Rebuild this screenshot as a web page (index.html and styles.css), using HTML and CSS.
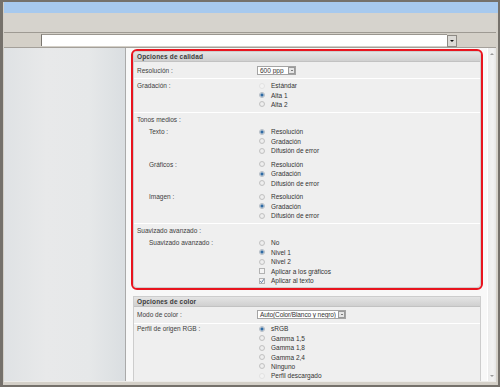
FILE: index.html
```html
<!DOCTYPE html>
<html lang="es">
<head>
<meta charset="utf-8">
<title>Opciones de calidad</title>
<link rel="stylesheet" href="styles.css">
</head>
<body>
<div class="frame">
  <div class="titlebar"></div>
  <div class="toolbar"></div>
  <div class="addressbar">
    <div class="addr-input"></div>
    <div class="addr-btn"><span class="tri"></span></div>
  </div>
  <div class="main">
    <aside class="sidebar"></aside>
    <div class="content">
      <section class="panel highlight">
        <div class="panel-head">Opciones de calidad</div>
        <div class="row row-select">
          <div class="label">Resolución :</div>
          <div class="select w600"><span class="select-text">600 ppp</span><span class="select-btn"><span class="tri"></span></span></div>
        </div>
        <div class="row">
          <div class="label">Gradación :</div>
          <div class="options">
            <div class="opt"><span class="radio disabled"></span>Estándar</div>
            <div class="opt"><span class="radio checked"></span>Alta 1</div>
            <div class="opt"><span class="radio"></span>Alta 2</div>
          </div>
        </div>
        <div class="row group">
          <div class="group-title">Tonos medios :</div>
          <div class="subrows">
            <div class="subrow">
              <div class="sublabel">Texto :</div>
              <div class="options">
                <div class="opt"><span class="radio checked"></span>Resolución</div>
                <div class="opt"><span class="radio"></span>Gradación</div>
                <div class="opt"><span class="radio"></span>Difusión de error</div>
              </div>
            </div>
            <div class="subrow">
              <div class="sublabel">Gráficos :</div>
              <div class="options">
                <div class="opt"><span class="radio"></span>Resolución</div>
                <div class="opt"><span class="radio checked"></span>Gradación</div>
                <div class="opt"><span class="radio"></span>Difusión de error</div>
              </div>
            </div>
            <div class="subrow">
              <div class="sublabel">Imagen :</div>
              <div class="options">
                <div class="opt"><span class="radio"></span>Resolución</div>
                <div class="opt"><span class="radio checked"></span>Gradación</div>
                <div class="opt"><span class="radio"></span>Difusión de error</div>
              </div>
            </div>
          </div>
        </div>
        <div class="row group last">
          <div class="group-title">Suavizado avanzado :</div>
          <div class="subrows">
            <div class="subrow">
              <div class="sublabel">Suavizado avanzado :</div>
              <div class="options">
                <div class="opt"><span class="radio"></span>No</div>
                <div class="opt"><span class="radio checked"></span>Nivel 1</div>
                <div class="opt"><span class="radio"></span>Nivel 2</div>
                <div class="opt"><span class="check"></span>Aplicar a los gráficos</div>
                <div class="opt"><span class="check checked"><svg viewBox="0 0 6 6" width="6" height="6"><polyline points="1.2,3.2 2.5,4.6 4.9,1.2" fill="none" stroke="#4a6f9c" stroke-width="0.9"/></svg></span>Aplicar al texto</div>
              </div>
            </div>
          </div>
        </div>
      </section>
      <section class="panel">
        <div class="panel-head">Opciones de color</div>
        <div class="row row-select">
          <div class="label">Modo de color :</div>
          <div class="select wauto"><span class="select-text">Auto(Color/Blanco y negro)</span><span class="select-btn"><span class="tri"></span></span></div>
        </div>
        <div class="row tight">
          <div class="label">Perfil de origen RGB :</div>
          <div class="options">
            <div class="opt"><span class="radio checked"></span>sRGB</div>
            <div class="opt"><span class="radio"></span>Gamma 1,5</div>
            <div class="opt"><span class="radio"></span>Gamma 1,8</div>
            <div class="opt"><span class="radio"></span>Gamma 2,4</div>
            <div class="opt"><span class="radio"></span>Ninguno</div>
            <div class="opt"><span class="radio disabled"></span>Perfil descargado</div>
          </div>
        </div>
      </section>
    </div>
    <div class="scrollbar"><span class="sb-up"></span><span class="sb-down"></span></div>
  </div>
  <div class="statusbar"></div>
</div>
</body>
</html>
```
FILE: styles.css
```css
html, body {
  margin: 0;
  padding: 0;
  background: #75716b;
  width: 500px;
  height: 387px;
  overflow: hidden;
}
body {
  padding: 2px 2px 2px 3px;
  box-sizing: border-box;
  font-family: "Liberation Sans", Arial, sans-serif;
  font-size: 6.5px;
  color: #353535;
}
.frame {
  width: 495px;
  height: 383px;
  background: #d4d0c8;
  padding: 0 2px 0 1px;
  box-sizing: border-box;
  display: flex;
  flex-direction: column;
}
.titlebar {
  height: 11px;
  background: #a7c9ee;
  margin-right: -2px;
}
.toolbar {
  height: 19px;
  background: #d6d3cd;
  border-bottom: 1px solid #9e9a93;
}
.addressbar {
  height: 15px;
  display: flex;
  align-items: flex-start;
  padding-top: 1px;
  padding-left: 37px;
  box-sizing: border-box;
  border-bottom: 1px solid #a4a09a;
}
.addr-input {
  width: 405px;
  height: 11px;
  background: #fff;
  border-left: 1px solid #7a7670;
  border-top: 1px solid #9a968f;
}
.addr-btn {
  width: 8px;
  height: 10px;
  margin-top: 1px;
  background: #dcdad6;
  border: 1px solid #8e8a84;
  display: flex;
  align-items: center;
  justify-content: center;
}
.tri {
  width: 0;
  height: 0;
  border-left: 2px solid transparent;
  border-right: 2px solid transparent;
  border-top: 2px solid #111;
}
.main {
  flex: 1;
  display: flex;
  min-height: 0;
}
.sidebar {
  width: 121px;
  background: linear-gradient(to right, #dfe2e4 0%, #e8e9ea 35%, #e6e8e9 70%, #dadee1 100%);
  border-right: 1px solid #aaaaaa;
}
.content {
  width: 361px;
  background: #f8f8f8;
  padding: 3px 6px 0 7px;
  box-sizing: border-box;
  overflow: hidden;
}
.scrollbar {
  width: 9px;
  background: linear-gradient(to right, #ffffff 0, #ffffff 1px, #ececec 1px, #f2f2f2 6px, #e6e6e6 100%);
  display: flex;
  flex-direction: column;
  justify-content: space-between;
  align-items: center;
  padding: 5px 0 4px;
  box-sizing: border-box;
}
.sb-up {
  width: 0;
  height: 0;
  border-left: 2px solid transparent;
  border-right: 2px solid transparent;
  border-bottom: 2px solid #9a9a9a;
}
.sb-down {
  width: 0;
  height: 0;
  border-left: 2px solid transparent;
  border-right: 2px solid transparent;
  border-top: 2px solid #9a9a9a;
}
.statusbar {
  height: 4px;
  background: #d4d0c8;
  border-top: 1px solid #ecebe8;
  box-sizing: border-box;
}
.panel {
  background: #efefef;
  border: 1px solid #cdcdcd;
  margin-bottom: 8px;
}
.panel.highlight {
  outline: 2px solid #e8141e;
  border-radius: 4px;
}
.panel-head {
  height: 10px;
  line-height: 10px;
  padding-left: 3px;
  background: linear-gradient(#e4e4e4, #d0d0d0);
  border-bottom: 1px solid #c2c2c2;
  box-sizing: border-box;
  font-weight: bold;
  color: #3a3a3a;
  letter-spacing: 0.15px;
}
.highlight .panel-head {
  border-radius: 3px 3px 0 0;
}
.row {
  display: flex;
  padding: 2px 3px 3px;
  border-top: 1px solid #ffffff;
}
.panel-head + .row {
  border-top: 0;
}
.row-select {
  padding: 3.5px 3px;
  align-items: center;
}
.row.tight {
  padding-top: 0.5px;
}
.label {
  width: 120px;
  flex: none;
  line-height: 9.4px;
  color: #404040;
}
.row-select .label {
  line-height: 9px;
}
.group {
  flex-direction: column;
  padding: 2px 3px 2.5px;
}
.group.last {
  padding: 2.5px 3px 1.5px;
}
.group-title {
  line-height: 9.4px;
  color: #404040;
}
.subrows {
  display: flex;
  flex-direction: column;
  gap: 4.4px;
  margin-top: 2.5px;
}
.subrow {
  display: flex;
  padding-left: 12px;
}
.sublabel {
  width: 108px;
  flex: none;
  line-height: 9.4px;
  color: #404040;
}
.options {
  display: flex;
  flex-direction: column;
}
.opt {
  height: 9.4px;
  display: flex;
  align-items: center;
  color: #333;
  white-space: nowrap;
}
.radio {
  width: 6px;
  height: 6px;
  box-sizing: border-box;
  border-radius: 50%;
  border: 1px solid #c2c2c2;
  background: radial-gradient(circle, #f2f2f2 0, #e4e4e4 100%);
  margin: 0 6px 0 2px;
  flex: none;
}
.radio.checked {
  border-color: #b4bcc4;
  background: radial-gradient(circle, #2f6aa3 0, #2f6aa3 1.3px, #c9d6e2 1.8px, #eef0f2 100%);
}
.radio.disabled {
  border-color: #e2e2e2;
  background: #f3f3f3;
}
.check {
  width: 6px;
  height: 6px;
  box-sizing: border-box;
  border: 1px solid #b2b2b2;
  background: #f4f4f4;
  margin: 0 6px 0 2px;
  flex: none;
  display: flex;
  align-items: center;
  justify-content: center;
}
.check svg {
  display: block;
  flex: none;
}
.select {
  height: 9px;
  background: #fff;
  border: 1px solid #a4a4a4;
  box-sizing: border-box;
  display: flex;
  align-items: center;
  justify-content: space-between;
  color: #333;
  line-height: 7px;
}
.select.w600 {
  width: 39px;
}
.select.wauto {
  width: 89px;
}
.select-text {
  padding-left: 2px;
  white-space: nowrap;
  overflow: hidden;
}
.wauto .select-text {
  letter-spacing: -0.1px;
}
.select-btn {
  width: 7px;
  height: 7px;
  box-sizing: border-box;
  border: 1px solid #9a9a9a;
  background: #e6e6e6;
  display: flex;
  align-items: center;
  justify-content: center;
  flex: none;
}
.select-btn .tri {
  border-left-width: 1.5px;
  border-right-width: 1.5px;
  border-top-width: 1.5px;
}
```
